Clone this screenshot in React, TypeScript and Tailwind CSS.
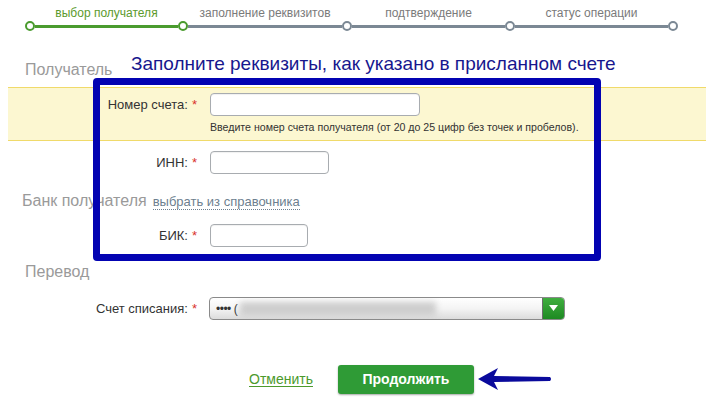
import React from "react";

function Step({ label, w, done, active }: { label: string; w: number; done: boolean; active: boolean }) {
  return (
    <div className="flex flex-col" style={{ width: w }}>
      <div
        className={`pl-[10px] text-center text-[12px] leading-[16px] whitespace-nowrap ${active ? "text-[#5b9a2c]" : "text-[#7a7a7a]"}`}
      >
        {label}
      </div>
      <div className="flex items-center h-[10px]">
        <div
          className={`w-[10px] h-[10px] rounded-full border-2 bg-white shrink-0 ${done ? "border-[#4a9b2e]" : "border-[#7b8894]"}`}
        />
        <div className={`flex-1 h-[3px] ${active ? "bg-[#4a9b2e]" : "bg-[#7b8894]"}`} />
      </div>
    </div>
  );
}

function Star() {
  return <span className="text-[#d9322b] ml-[4px]">*</span>;
}

function Input({ w }: { w: number }) {
  return (
    <div
      className="h-[23px] rounded-[4px] border border-[#a8acb0] bg-white shadow-[inset_0_1px_1px_rgba(0,0,0,0.06)]"
      style={{ width: w }}
    />
  );
}

export default function App() {
  return (
    <div
      className="relative w-[706px] h-[404px] bg-white overflow-hidden text-[#333]"
      style={{ fontFamily: '"Liberation Sans", Arial, sans-serif' }}
    >
      {/* progress */}
      <div className="h-[40px] pt-[5px] pl-[25px]">
        <div className="flex items-end">
          <Step label="выбор получателя" w={153} done active />
          <Step label="заполнение реквизитов" w={164} done={true} active={false} />
          <Step label="подтверждение" w={163} done={false} active={false} />
          <Step label="статус операции" w={163} done={false} active={false} />
          <div className="w-[10px] h-[10px] rounded-full border-2 border-[#7b8894] bg-white" />
        </div>
      </div>

      {/* Получатель */}
      <div className="mt-[21px] pl-[25px] text-[16px] leading-[18px] text-[#9a9a9a]">Получатель</div>

      <div className="mt-[8px] ml-[8px] h-[54px] border-y border-[#f0da6a] bg-[#fcf7d1]">
        <div className="flex items-center mt-[5px]">
          <div className="w-[189px] text-right text-[13px] leading-[22px] text-[#333]">
            Номер счета:<Star />
          </div>
          <div className="ml-[13px]">
            <Input w={210} />
          </div>
        </div>
        <div className="pl-[202px] mt-[4px] text-[10.6px] leading-[14px] text-[#333]">
          Введите номер счета получателя (от 20 до 25 цифр без точек и пробелов).
        </div>
      </div>

      <div className="flex items-center mt-[10px]">
        <div className="w-[197px] text-right text-[13px] leading-[22px]">
          ИНН:<Star />
        </div>
        <div className="ml-[13px]">
          <Input w={119} />
        </div>
      </div>

      <div className="mt-[18px] pl-[22px] flex items-baseline leading-[18px]">
        <span className="text-[16px] text-[#9a9a9a]">Банк получателя</span>
        <span className="ml-[6px] text-[13px] text-[#6d7f8f] border-b border-dotted border-[#6d7f8f] leading-[15px]">
          выбрать из справочника
        </span>
      </div>

      <div className="flex items-center mt-[14px]">
        <div className="w-[197px] text-right text-[13px] leading-[22px]">
          БИК:<Star />
        </div>
        <div className="ml-[13px]">
          <Input w={98} />
        </div>
      </div>

      <div className="mt-[16px] pl-[25px] text-[16px] leading-[18px] text-[#9a9a9a]">Перевод</div>

      <div className="flex items-center mt-[16px]">
        <div className="w-[197px] text-right text-[13px] leading-[22px]">
          Счет списания:<Star />
        </div>
        <div className="ml-[12px] w-[356px] h-[23px] rounded-[4px] border border-[#8a8a8a] flex overflow-hidden bg-gradient-to-b from-white via-[#f4f4f4] to-[#dcdcdc]">
          <div className="flex-1 flex items-center pl-[6px] text-[12px] text-[#333]">
            <span className="tracking-[-0.5px]">••••</span>
            <span className="ml-[3px]">(</span>
            <span className="ml-[2px] w-[196px] h-[14px] bg-[#cdcdcd] blur-[3px]" />
          </div>
          <div className="w-[22px] border-l border-[#6b6b6b] bg-gradient-to-b from-[#3fae3f] to-[#1d8a22] flex items-center justify-center">
            <svg width="9" height="7" viewBox="0 0 9 7">
              <path d="M0 0 L9 0 L4.5 6 Z" fill="white" />
            </svg>
          </div>
        </div>
      </div>

      <div className="flex items-center mt-[45px] pl-[249px]">
        <span className="text-[14px] text-[#4c9a2c] underline underline-offset-2">Отменить</span>
        <button className="ml-[25px] w-[136px] h-[29px] rounded-[3px] bg-[#2f9b36] text-white text-[14px] font-bold shadow-[0_1px_2px_rgba(0,0,0,0.35)]">
          Продолжить
        </button>
      </div>

      {/* annotation overlays */}
      <div className="absolute left-[131px] top-[53px] text-[19px] leading-[22px] text-[#17178e] whitespace-nowrap">
        Заполните реквизиты, как указано в присланном счете
      </div>
      <div className="absolute left-[93px] top-[78px] w-[508px] h-[183px] border-[7px] border-[#0303b2] rounded-[4px]" />
      <svg className="absolute left-[476px] top-[366px]" width="78" height="26" viewBox="0 0 78 26">
        <path
          d="M2 13 L22 2 L18 10 L74 11 Q76 13 74 15 L18 16 L22 24 Z"
          fill="#0a0a9c"
        />
      </svg>
    </div>
  );
}
